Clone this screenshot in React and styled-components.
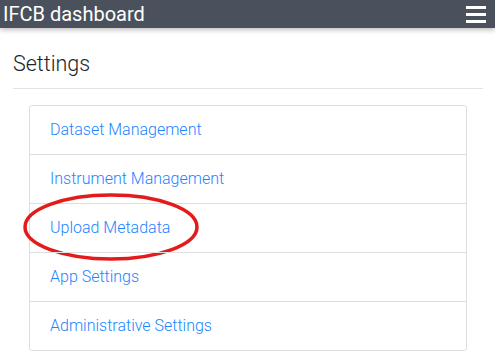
import React from "react";
import styled, { createGlobalStyle } from "styled-components";

const GlobalStyle = createGlobalStyle`
  body {
    margin: 0;
    background: #fff;
    font-family: Roboto, "Liberation Sans", sans-serif;
  }
`

const NavBar = styled.div`
  height: 28px;
  background: #4b515c;
  display: flex;
  align-items: center;
  justify-content: space-between;
  padding: 0 9px 0 3px;
  box-shadow: 0 2px 5px rgba(0, 0, 0, 0.25);
`

const Brand = styled.div`
  color: #fff;
  font-size: 20px;
  line-height: 28px;
`

const Burger = styled.button`
  background: none;
  border: 0;
  padding: 0;
  width: 20px;
  display: flex;
  flex-direction: column;
  gap: 4px;
  span {
    display: block;
    height: 3px;
    background: #fff;
  }
`

const Page = styled.div`
  padding: 0 12px 0 13px;
`

const Heading = styled.h2`
  margin: 0;
  padding-top: 23px;
  font-size: 21.5px;
  font-weight: 300;
  line-height: 25px;
  color: #212529;
`

const Rule = styled.hr`
  border: 0;
  border-top: 1px solid #e3e3e3;
  margin: 12px 0 16px;
`

const ListGroup = styled.div`
  margin: 0 16px;
  border: 1px solid #dedede;
  border-radius: 3px;
`

const ListItem = styled.a`
  display: block;
  position: relative;
  padding: 12px 20px;
  line-height: 24px;
  font-size: 16px;
  font-weight: 300;
  color: #1c84ff;
  text-decoration: none;
  border-top: ${(p) => (p.first ? "0" : "1px solid #dedede")};
`

const Circle = styled.svg`
  position: absolute;
  left: -8px;
  top: -12px;
  overflow: visible;
  pointer-events: none;
`

const items = [
  "Dataset Management",
  "Instrument Management",
  "Upload Metadata",
  "App Settings",
  "Administrative Settings",
]

export default function App() {
  return (
    <>
      <GlobalStyle />
      <NavBar>
        <Brand>IFCB dashboard</Brand>
        <Burger>
          <span />
          <span />
          <span />
        </Burger>
      </NavBar>
      <Page>
        <Heading>Settings</Heading>
        <Rule />
        <ListGroup>
          {items.map((name, i) => (
            <ListItem key={name} href="#" first={i === 0}>
              {name}
              {name === "Upload Metadata" ? (
                <Circle width="180" height="72" viewBox="0 0 180 72">
                  <ellipse cx="89" cy="35" rx="86" ry="32" fill="none" stroke="#e31b1b" strokeWidth="3.5" />
                </Circle>
              ) : null}
            </ListItem>
          ))}
        </ListGroup>
      </Page>
    </>
  )
}
